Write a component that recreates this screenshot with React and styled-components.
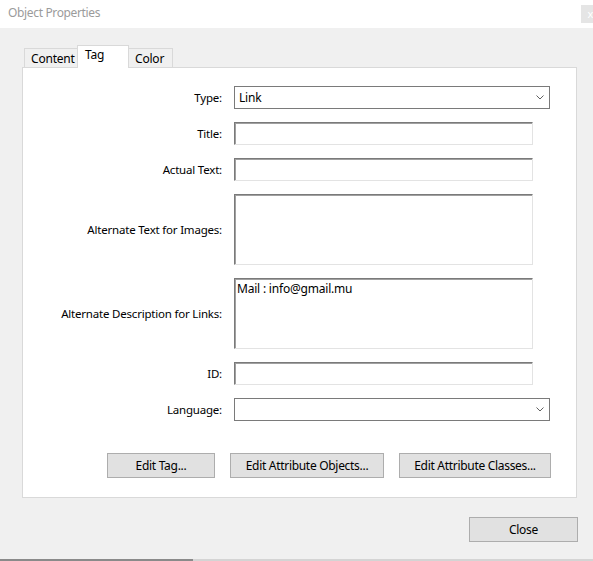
import { createGlobalStyle, styled } from "styled-components";

const GlobalStyle = createGlobalStyle`
  html, body {
    margin: 0;
    padding: 0;
    background: #f0f0f0;
  }
  body {
    font-family: "Noto Sans", "Open Sans", "Liberation Sans", sans-serif;
    font-size: 11.5px;
    letter-spacing: -0.2px;
    color: #000;
  }
`;

const Window = styled.div`
  width: 593px;
  height: 561px;
  display: flex;
  flex-direction: column;
  overflow: hidden;
  background: #f0f0f0;
`;

const TitleBar = styled.div`
  height: 28px;
  flex: none;
  background: #fff;
  display: flex;
  align-items: flex-start;
  padding-left: 8px;
  color: #9b9b9b;
  font-size: 12px;
  letter-spacing: -0.35px;

  span {
    line-height: 26px;
  }
`;

const CloseBox = styled.div`
  margin-left: auto;
  margin-top: 5px;
  width: 12px;
  height: 18px;
  background: #e5e5e5;
  color: #fff;
  font-size: 11px;
  line-height: 18px;
  text-align: right;
  overflow: hidden;
`;

const Body = styled.div`
  flex: 1;
  display: flex;
  flex-direction: column;
  padding: 17px 16px 0 22px;
`;

const TabRow = styled.div`
  display: flex;
  align-items: flex-end;
  height: 22px;
  padding-left: 2px;
`;

const Tab = styled.div`
  box-sizing: border-box;
  width: ${(p) => p.$w}px;
  height: ${(p) => (p.$active ? 23 : 19)}px;
  margin-bottom: ${(p) => (p.$active ? -1 : 0)}px;
  margin-left: ${(p) => (p.$active ? -1 : 0)}px;
  margin-right: ${(p) => (p.$active ? -1 : 0)}px;
  background: ${(p) => (p.$active ? "#fff" : "#f0f0f0")};
  border: 1px solid #d9d9d9;
  border-bottom: none;
  padding: ${(p) => (p.$active ? "1px 0 0 7px" : "2px 0 0 6px")};
  position: relative;
  z-index: ${(p) => (p.$active ? 1 : 0)};
  font-size: 12px;
  line-height: 15px;
  white-space: nowrap;
`;

const Panel = styled.div`
  background: #fff;
  border: 1px solid #d9d9d9;
  padding: 18px 0 19px 0;
  display: flex;
  flex-direction: column;
`;

const Form = styled.div`
  display: flex;
  flex-direction: column;
  gap: 13px;
`;

const Row = styled.div`
  display: flex;
  align-items: center;
  gap: 12px;
`;

const Label = styled.div`
  width: 199px;
  flex: none;
  text-align: right;
`;

const Field = styled.div`
  box-sizing: border-box;
  width: 299px;
  height: ${(p) => (p.$tall ? 71 : 23)}px;
  background: #fff;
  border: 1px solid;
  border-color: #7a7a7a #e3e3e3 #e3e3e3 #7a7a7a;
  box-shadow: inset 1px 1px 0 #a0a0a0;
  padding: 2px 2px;
  font-size: 12px;
  line-height: 15px;
`;

const Select = styled.div`
  box-sizing: border-box;
  width: 316px;
  height: 23px;
  background: #fff;
  border: 1px solid #7a7a7a;
  display: flex;
  align-items: center;
  padding: 0 5px 0 4px;
  font-size: 12px;

  span {
    flex: 1;
  }
`;

const Chevron = () => (
  <svg width="8" height="5" viewBox="0 0 8 5">
    <path d="M0.5 0.5 L4 4 L7.5 0.5" fill="none" stroke="#606060" strokeWidth="1" />
  </svg>
);

const ButtonRow = styled.div`
  display: flex;
  justify-content: flex-end;
  gap: 15px;
  margin-top: 32px;
  padding-right: 25px;
`;

const Button = styled.button`
  box-sizing: border-box;
  width: ${(p) => p.$w}px;
  height: 25px;
  background: #e1e1e1;
  border: 1px solid #adadad;
  border-radius: 0;
  font-family: inherit;
  font-size: 12px;
  letter-spacing: -0.3px;
  color: #000;
  padding: 0;
`;

const Footer = styled.div`
  display: flex;
  justify-content: flex-end;
  margin-top: 19px;
  margin-right: -1px;
`;

const BottomEdge = styled.div`
  height: 2px;
  flex: none;
  display: flex;
  background: #d4d4d4;

  &::before {
    content: "";
    width: 193px;
    background: #8a8a8a;
  }
`;

const TextRow = ({ label, tall, children }) => (
  <Row>
    <Label>{label}</Label>
    <Field $tall={tall}>{children}</Field>
  </Row>
);

const SelectRow = ({ label, value }) => (
  <Row>
    <Label>{label}</Label>
    <Select>
      <span>{value}</span>
      <Chevron />
    </Select>
  </Row>
);

export default function App() {
  return (
    <>
      <GlobalStyle />
      <Window>
        <TitleBar>
          <span>Object Properties</span>
          <CloseBox>x</CloseBox>
        </TitleBar>
        <Body>
          <TabRow>
            <Tab $w={54}>Content</Tab>
            <Tab $w={52} $active>Tag</Tab>
            <Tab $w={45}>Color</Tab>
          </TabRow>
          <Panel>
            <Form>
              <SelectRow label="Type:" value="Link" />
              <TextRow label="Title:" />
              <TextRow label="Actual Text:" />
              <TextRow label="Alternate Text for Images:" tall />
              <TextRow label="Alternate Description for Links:" tall>
                Mail : info@gmail.mu
              </TextRow>
              <TextRow label="ID:" />
              <SelectRow label="Language:" value="" />
            </Form>
            <ButtonRow>
              <Button $w={108}>Edit Tag...</Button>
              <Button $w={154}>Edit Attribute Objects...</Button>
              <Button $w={152}>Edit Attribute Classes...</Button>
            </ButtonRow>
          </Panel>
          <Footer>
            <Button $w={109}>Close</Button>
          </Footer>
        </Body>
        <BottomEdge />
      </Window>
    </>
  );
}
